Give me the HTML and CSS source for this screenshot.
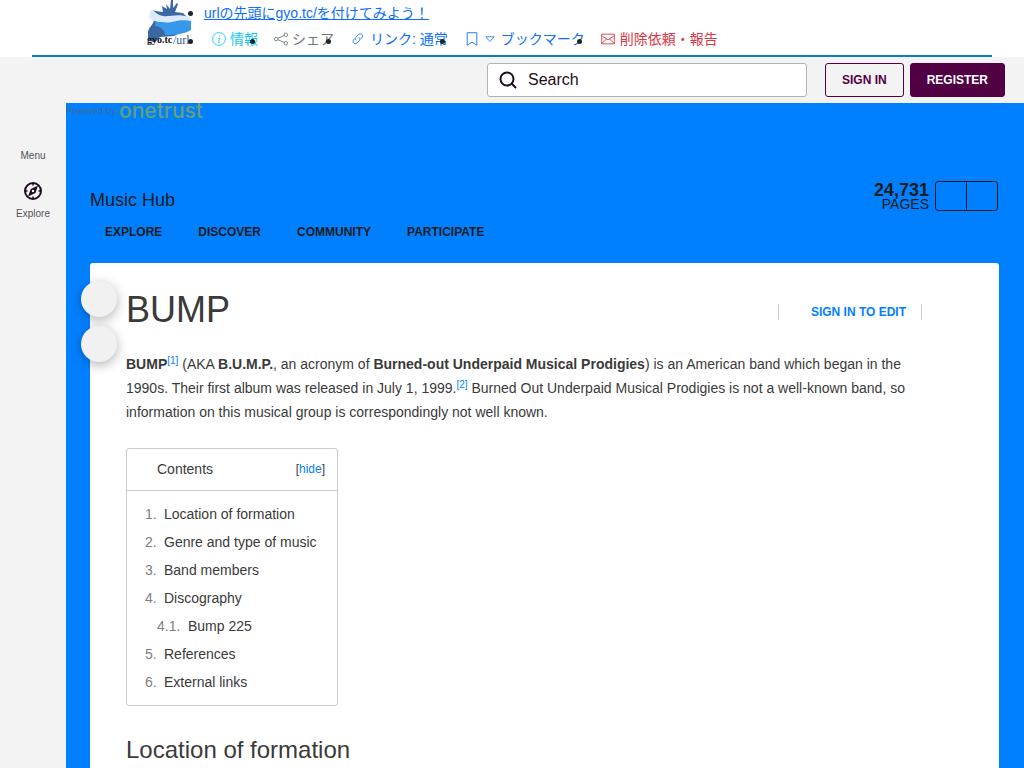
FILE: index.html
```html
<!DOCTYPE html>
<html lang="en">
<head>
<meta charset="utf-8">
<meta name="viewport" content="width=device-width, initial-scale=1">
<title>BUMP | Music Hub</title>
<link rel="stylesheet" href="styles.css">
</head>
<body>
<header class="archive" lang="ja">
  <div class="archive-inner">
    <a class="archive-logo" href="#" aria-label="gyo.tc/url">
      <svg width="46" height="46" viewBox="0 0 46 46" aria-hidden="true">
        <path fill="#3b67a3" d="M1 33c0-5 4-7 6-12L3 15c0-3 2-5 5-4l8 1-1-6 5 3-1-5 4 5 1-9h2v8l4-5 1 1-3 8 8 1 7 7-3 10-13 6-14 1-5 5c-3 0-7-1-7-4z"/>
        <path fill="#3797ea" d="M9 20c8-3 15-2 23-4l12 5v9c-9 5-19 5-26 5 0-5-5-9-10-9z"/>
        <path fill="#dce9fc" d="M4 10c4 1 6 5 12 6 8 1 13-3 27 1l1 4c-14-3-18 3-29 1-6 0-11-2-13-5z"/>
        <text class="logo-name" x="0" y="43">gyo.tc</text>
        <text class="logo-url" x="26" y="44">/url</text>
      </svg>
    </a>
    <ul class="archive-rows">
      <li><a class="tip" href="#">urlの先頭にgyo.tc/を付けてみよう！</a></li>
      <li>
        <ul class="archive-nav">
          <li class="flat"><a class="cyan" href="#"><svg class="ico" viewBox="0 0 16 16"><circle cx="8" cy="8" r="7.3"/><path d="M7 7h1.5L7.5 12h1.3M8.6 4.2v1"/></svg>情報</a></li>
          <li><a class="grey" href="#"><svg class="ico" viewBox="0 0 16 16"><circle cx="2.5" cy="8" r="2"/><circle cx="13.5" cy="3.2" r="2"/><circle cx="13.5" cy="12.8" r="2"/><path d="m4.400 7.200 7.200-3.200M4.400 8.800l7.200 3.200"/></svg>シェア</a></li>
          <li><a class="blue" href="#"><svg class="ico" viewBox="0 0 16 16"><path d="M6 9.500c-1.500-1.500-1-3 0-4L8.500 3c3-2.500 6 1 4 3.500L11 8M9 6c1.500 1.500 1.500 3 .5 4L7 12.500c-3 2.500-6-1-4-3.500L4.500 7.500"/></svg>リンク: 通常</a></li>
          <li><a class="blue" href="#"><svg class="ico" viewBox="0 0 16 16"><path d="M2.500.8h11v14.400L8 11.500l-5.500 3.700z"/></svg><svg class="ico caret" viewBox="0 0 16 16"><path d="M2.500 5h11L8 11.500z"/></svg>ブックマーク</a></li>
          <li><a class="red" href="#"><svg class="ico" viewBox="0 0 16 16"><path d="M.8 2.500h14.400v11H.8zM.8 4.200 8 9l7.200-4.800M.8 13l5.600-5M15.200 13 9.600 8"/></svg>削除依頼・報告</a></li>
        </ul>
      </li>
    </ul>
  </div>
</header>

<div class="site">
  <nav class="rail" aria-label="Global">
    <a href="#">Menu</a>
    <a href="#" class="explore">
      <svg width="20" height="20" viewBox="0 0 20 20" fill="none" stroke="#1f0d20" stroke-width="2" aria-hidden="true"><circle cx="10" cy="10" r="8"/><path d="M10 2v2.500M10 15.500V18M2 10h2.500M15.500 10H18" stroke-width="1.500"/><path fill="#1f0d20" fill-rule="evenodd" stroke="none" d="M15 4.500 12.500 12 5 15.500 7.800 8zM10 8.800a1.200 1.200 0 1 0 0 2.400 1.200 1.200 0 0 0 0-2.400z"/></svg>
      <span>Explore</span>
    </a>
  </nav>

  <div class="main">
    <div class="topbar">
      <form class="search" role="search">
        <svg width="18" height="18" viewBox="0 0 18 18" fill="none" stroke="#1f0d20" stroke-width="2" aria-hidden="true"><circle cx="8" cy="8" r="6.500"/><path d="m12.500 12.500 4.500 4.500"/></svg>
        <input type="search" placeholder="Search" aria-label="Search">
      </form>
      <button class="btn" type="button">SIGN IN</button>
      <button class="btn solid" type="button">REGISTER</button>
    </div>

    <div class="community">
      <div class="powered"><span>Powered by</span><strong>onetrust</strong></div>
      <header class="hub">
        <div>
          <a class="hub-name" href="#">Music Hub</a>
          <nav class="hub-nav" aria-label="Music Hub">
            <a href="#">EXPLORE</a><a href="#">DISCOVER</a><a href="#">COMMUNITY</a><a href="#">PARTICIPATE</a>
          </nav>
        </div>
        <div class="hub-side">
          <div class="count"><b>24,731</b><span>PAGES</span></div>
          <div class="tools"><button type="button" aria-label="Recent changes"></button><button type="button" aria-label="More"></button></div>
        </div>
      </header>

      <main class="page">
        <div class="floating"><button type="button" aria-label="Contents"></button><button type="button" aria-label="Share"></button></div>
        <div class="title-row">
          <h1>BUMP</h1>
          <div class="edit"><a href="#">SIGN IN TO EDIT</a></div>
        </div>
        <p><b>BUMP</b><sup><a href="#">[1]</a></sup> (AKA <b>B.U.M.P.</b>, an acronym of <b>Burned-out Underpaid Musical Prodigies</b>) is an American band which began in the 1990s. Their first album was released in July 1, 1999.<sup><a href="#">[2]</a></sup> Burned Out Underpaid Musical Prodigies is not a well-known band, so information on this musical group is correspondingly not well known.</p>
        <section class="toc">
          <div class="toc-head"><span>Contents</span><span class="hide">[<a href="#">hide</a>]</span></div>
          <ul>
            <li><span>1.</span><a href="#">Location of formation</a></li>
            <li><span>2.</span><a href="#">Genre and type of music</a></li>
            <li><span>3.</span><a href="#">Band members</a></li>
            <li><span>4.</span><a href="#">Discography</a></li>
            <li class="sub"><span>4.1.</span><a href="#">Bump 225</a></li>
            <li><span>5.</span><a href="#">References</a></li>
            <li><span>6.</span><a href="#">External links</a></li>
          </ul>
        </section>
        <h2>Location of formation</h2>
      </main>
    </div>
  </div>
</div>
</body>
</html>
```
FILE: styles.css
```css
* { box-sizing: border-box; }
html { overflow: hidden; }
body {
  margin: 0;
  min-height: 100vh;
  display: flex;
  flex-direction: column;
  font-family: "Liberation Sans", "Noto Sans CJK JP", sans-serif;
  font-size: 14px;
  color: #3a3a3a;
  background: #fff;
}
a { color: #0080ff; text-decoration: none; }
button { font: inherit; padding: 0; }

/* Archive bar */
.archive { padding: 0 32px; }
.archive-inner {
  display: flex;
  height: 57px;
  padding-left: 115px;
  border-bottom: 2px solid #0b7dcd;
}
.archive-logo { width: 57px; }
.logo-name { font: bold 10px "Liberation Serif", serif; fill: #111; }
.logo-url { font: 12px "Liberation Serif", serif; fill: #2d5a94; }
.archive ul { margin: 0; padding: 0; list-style: disc; }
.archive li { color: #212529; font-size: 16px; line-height: 26px; }
.archive a { font-size: 14px; }
.tip { color: #0d6efd; text-decoration: underline; }
.archive-nav { display: flex; }
.archive-nav li a { display: flex; align-items: center; padding: 0 8px; white-space: nowrap; }
.archive-nav .flat { list-style: none; }
.ico { width: 14px; height: 14px; margin-right: 4px; fill: none; stroke: currentColor; }
.archive .blue .ico, .archive .red .ico { margin-right: 5px; }
.archive .caret { width: 12px; }
.archive .cyan { color: #0dcaf0; }
.archive .grey { color: #6c757d; }
.archive .blue { color: #0d6efd; padding-left: 9px; }
.archive .red { color: #dc3545; }

/* Frame */
.site { display: flex; flex: 1; background: #f3f3f3; }
.rail {
  width: 66px;
  padding-top: 93px;
  display: flex;
  flex-direction: column;
  align-items: center;
  gap: 19px;
}
.rail a { color: #55505a; font-size: 10px; line-height: 12px; }
.explore { display: flex; flex-direction: column; align-items: center; gap: 7px; }
.main { flex: 1; min-width: 0; display: flex; flex-direction: column; }
.topbar {
  display: flex;
  justify-content: flex-end;
  align-items: center;
  height: 46px;
  padding-right: 19px;
}
.search {
  display: flex;
  align-items: center;
  gap: 11px;
  width: 320px;
  height: 34px;
  margin-right: 18px;
  padding-left: 11px;
  border: 1px solid #b3b3b3;
  border-radius: 3px;
  background: #fff;
}
.search input { flex: 1; min-width: 0; border: 0; padding: 0; outline: 0; background: none; font: 16px "Liberation Sans", sans-serif; }
.search input::placeholder { color: #1f0d20; opacity: 1; }
.btn {
  height: 34px;
  padding: 0 16px;
  border: 1px solid #520044;
  border-radius: 3px;
  background: none;
  color: #520044;
  font-size: 12px;
  font-weight: bold;
}
.btn.solid { margin-left: 6px; background: #520044; color: #fff; }

/* Community area */
.community { flex: 1; padding: 0 25px 0 24px; background: #0080ff; }
.powered { display: flex; align-items: center; height: 16px; margin-left: -24px; gap: 2px; }
.powered span { width: 51px; color: #46688c; font: 9px/18px Inter, sans-serif; white-space: nowrap; }
.powered strong { color: #669e79; font: 500 21px/16px Inter, sans-serif; }
.hub { display: flex; justify-content: space-between; height: 144px; padding-top: 62px; }
.hub a, .count { color: #111c1c; }
.hub-name { display: block; margin-top: 8px; font-size: 18px; line-height: 22px; }
.hub-nav { display: flex; gap: 36px; padding: 14px 0 0 15px; font-size: 12px; font-weight: bold; line-height: 14px; }
.hub-side { display: flex; gap: 6px; padding-right: 1px; }
.count { display: flex; flex-direction: column; align-items: flex-end; line-height: 14px; padding-top: 2px; }
.count b { font-size: 18px; }
.tools { display: flex; height: 30px; border: 1px solid #111c1c; border-radius: 3px; }
.tools button { width: 30px; border: 0; background: none; }
.tools button + button { width: 31px; border-left: 1px solid #111c1c; }

/* Article */
.page { position: relative; padding: 24px 36px; background: #fff; border-radius: 3px; min-height: 505px; }
.floating { position: absolute; left: -9px; top: 18px; display: flex; flex-direction: column; gap: 9px; }
.floating button { width: 36px; height: 36px; border: 0; border-radius: 50%; background: #f1f1f1; box-shadow: 0 3px 12px rgba(0, 0, 0, .3); }
.title-row { display: flex; justify-content: space-between; align-items: center; }
h1 { margin: 0; font-size: 36px; font-weight: normal; line-height: 45px; }
.edit { margin: 4px 41px 0 0; padding: 0 15px 0 32px; border: solid #ccc; border-width: 0 1px; font-size: 12px; font-weight: bold; line-height: 16px; }
p { margin: 20px 36px 0 0; line-height: 24px; }
sup { font-size: 10px; line-height: 0; vertical-align: 5px; }
.toc { width: max-content; min-width: 212px; margin-top: 24px; border: 1px solid #ccc; border-radius: 3px; }
.toc-head { display: flex; justify-content: space-between; padding: 0 12px 0 30px; line-height: 41px; border-bottom: 1px solid #ccc; }
.hide { font-size: 12px; }
.toc ul { margin: 0; padding: 9px 18px; list-style: none; line-height: 28px; }
.toc li { display: flex; }
.toc li span { width: 19px; color: #808080; }
.toc li a { color: #3a3a3a; }
.toc .sub { padding-left: 12px; }
.toc .sub span { width: 31px; }
h2 { margin: 29px 0 0; font-size: 24px; font-weight: normal; line-height: 30px; }
```
